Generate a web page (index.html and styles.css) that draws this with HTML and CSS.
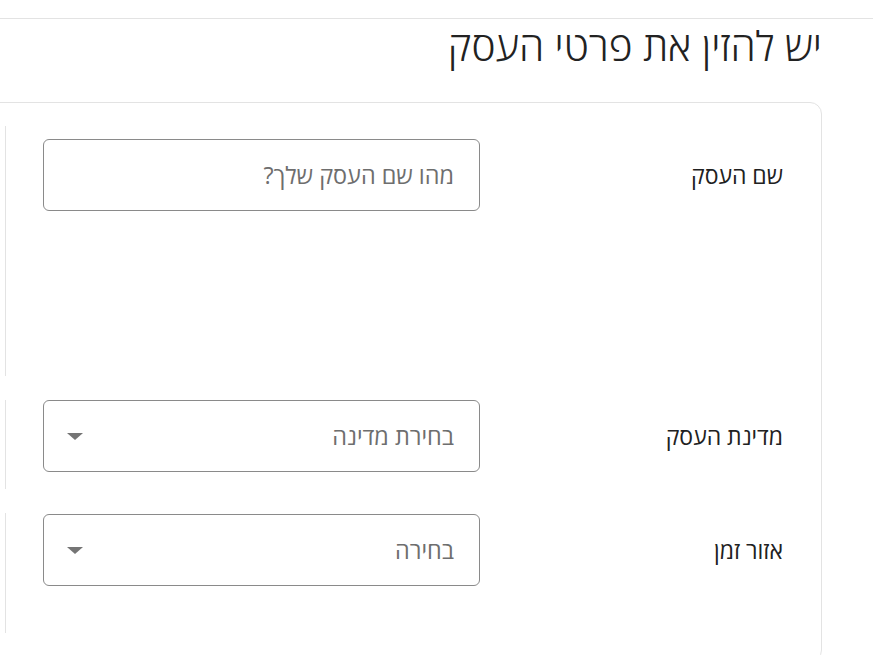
FILE: index.html
```html
<!DOCTYPE html>
<html lang="he" dir="rtl">
  <head>
    <meta charset="UTF-8" />
    <meta name="viewport" content="width=device-width, initial-scale=1.0" />
    <title>פרטי העסק</title>
    <link rel="stylesheet" href="styles.css">
  </head>
  <body>
    <header class="topbar"></header>

    <main class="page">
      <h1 class="page-title">יש להזין את פרטי העסק</h1>

      <section class="card">
        <div class="form-row row-name">
          <label class="form-label" for="bizName">שם העסק</label>
          <div class="form-field">
            <input class="text-input" id="bizName" type="text" placeholder="מהו שם העסק שלך?">
          </div>
          <div class="form-aside"></div>
        </div>

        <div class="form-row row-country">
          <label class="form-label" for="bizCountry">מדינת העסק</label>
          <div class="form-field">
            <div class="select-box" id="bizCountry">
              <span class="select-value">בחירת מדינה</span>
              <span class="select-arrow"></span>
            </div>
          </div>
          <div class="form-aside"></div>
        </div>

        <div class="form-row row-zone">
          <label class="form-label" for="bizZone">אזור זמן</label>
          <div class="form-field">
            <div class="select-box" id="bizZone">
              <span class="select-value">בחירה</span>
              <span class="select-arrow"></span>
            </div>
          </div>
          <div class="form-aside"></div>
        </div>
      </section>
    </main>
  </body>
</html>
```

FILE: styles.css
```css
* {
  box-sizing: border-box;
}

body {
  margin: 0;
  font-family: "Open Sans", "Liberation Sans", sans-serif;
  background: #ffffff;
  color: #212121;
  overflow: hidden;
}

.topbar {
  height: 19px;
  border-bottom: 1px solid #e3e3e3;
}

.page {
  margin-right: 51px;
  margin-left: -40px;
}

.page-title {
  margin: 1px 0 0 0;
  font-size: 40.6px;
  font-weight: 300;
  line-height: 52px;
  color: #222222;
}

.card {
  margin-top: 30px;
  border: 1px solid #e3e3e3;
  border-radius: 12px;
  padding: 23px 38px 0 0;
  min-height: 560px;
}

.form-row {
  display: flex;
  align-items: flex-start;
  margin-bottom: 24px;
}

.row-name {
  height: 250px;
  padding-top: 13px;
}

.row-country {
  height: 89px;
}

.row-zone {
  height: 120px;
  padding-top: 1px;
}

.form-label {
  flex: 0 0 303px;
  font-size: 23px;
  line-height: 72px;
  color: #212121;
}

.form-field {
  flex: 0 0 437px;
}

.form-aside {
  flex: 1;
  align-self: stretch;
  margin-right: 37px;
  border-right: 1px solid #e3e3e3;
}

.row-name .form-aside {
  margin-top: -13px;
}

.row-zone .form-aside {
  margin-top: -1px;
}

.text-input,
.select-box {
  display: flex;
  align-items: center;
  width: 100%;
  height: 72px;
  padding: 0 25px;
  border: 1px solid #8a8a8a;
  border-radius: 6px;
  background: white;
  font-family: inherit;
  font-size: 23.4px;
  color: #212121;
}

.text-input::placeholder {
  color: #6e6e6e;
}

.select-value {
  flex: 1;
  color: #6e6e6e;
}

.select-arrow {
  width: 0;
  height: 0;
  margin-left: -2px;
  border-left: 8px solid transparent;
  border-right: 8px solid transparent;
  border-top: 7px solid #757575;
}
```
